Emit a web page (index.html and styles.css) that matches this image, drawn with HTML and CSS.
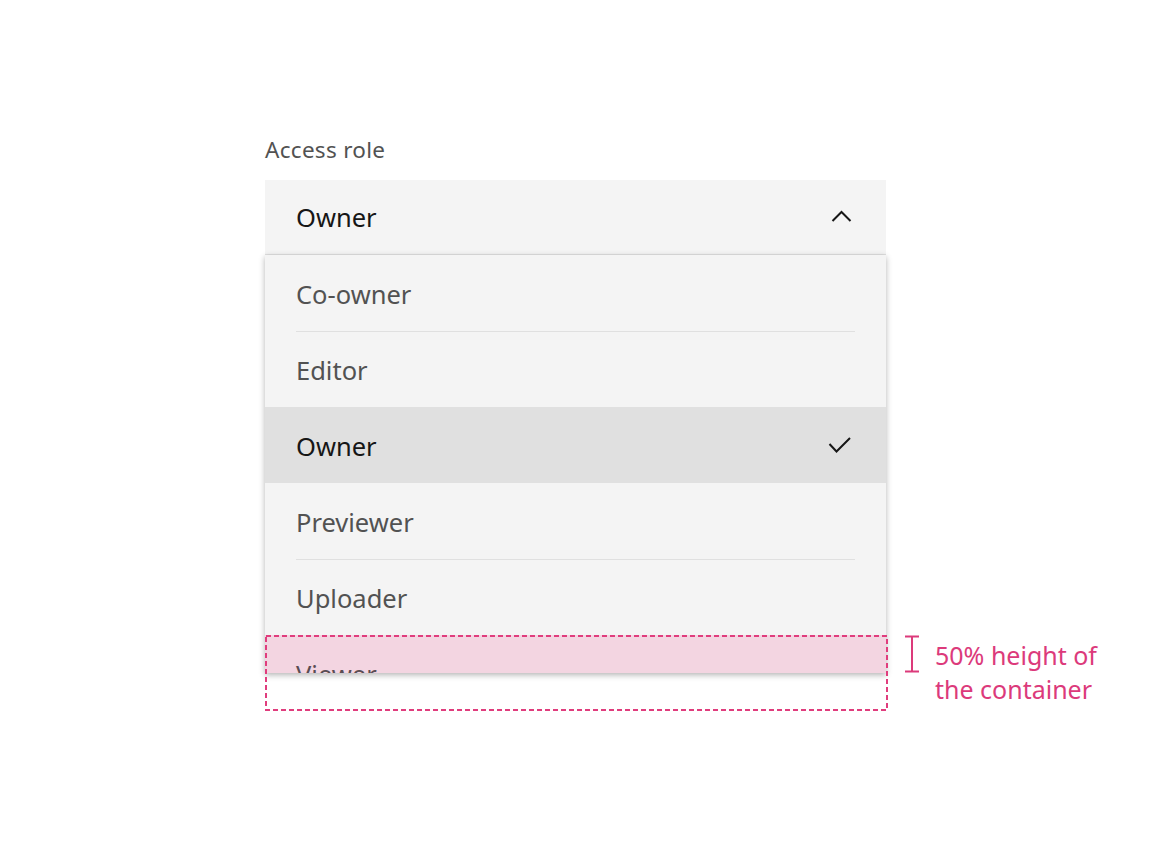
FILE: index.html
```html
<!DOCTYPE html>
<html lang="en">
<head>
<meta charset="utf-8">
<title>Access role dropdown</title>
<link rel="stylesheet" href="styles.css">
</head>
<body>
<div class="page">
  <div class="field-wrap">
    <div class="label">Access role</div>
    <div class="dropdown">
      <div class="field">
        <span class="field-value">Owner</span>
        <svg class="chevron" width="21" height="12" viewBox="0 0 21 12"><polyline points="1.5,11 10.5,2 19.5,11" fill="none" stroke="#161616" stroke-width="2"/></svg>
      </div>
      <div class="menu">
        <div class="item"><span class="item-text">Co-owner</span></div>
        <div class="item sep"><span class="item-text">Editor</span></div>
        <div class="item selected"><span class="item-text">Owner</span>
          <svg class="check" width="23" height="17" viewBox="0 0 23 17"><polyline points="1.5,8 8.5,15.5 22,2" fill="none" stroke="#161616" stroke-width="2"/></svg>
        </div>
        <div class="item"><span class="item-text">Previewer</span></div>
        <div class="item sep"><span class="item-text">Uploader</span></div>
        <div class="item ghost"><span class="item-text">Viewer</span></div>
      </div>
      <svg class="dash-box" width="624" height="77" viewBox="0 0 624 77"><rect x="1" y="1" width="621" height="74" fill="none" stroke="#e03d7d" stroke-width="2" stroke-dasharray="5 3"/></svg>
      <svg class="bracket" width="16" height="38" viewBox="0 0 16 38"><path d="M1 1.5H15M8 1.5V36.5M1 36.5H15" fill="none" stroke="#dc3a7b" stroke-width="2"/></svg>
      <div class="note">50% height of<br>the container</div>
    </div>
  </div>
</div>
</body>
</html>
```

FILE: styles.css
```css
* { box-sizing: border-box; }
html, body { margin: 0; padding: 0; background: #ffffff; }
body { font-family: "Noto Sans", "Open Sans", sans-serif; min-height: 864px; }

.page {
  padding-top: 135px;
  padding-left: 265px;
  padding-bottom: 120px;
}

.field-wrap { width: 621px; }

.label {
  font-size: 22.5px;
  line-height: 30px;
  letter-spacing: 0.3px;
  color: #525252;
  margin-bottom: 15px;
}

.dropdown {
  position: relative;
  padding-bottom: 60px;
}

.field {
  height: 75px;
  background: #f4f4f4;
  border-bottom: 1px solid #e0e0e0;
  display: flex;
  align-items: center;
  justify-content: space-between;
  padding: 0 34px 0 31px;
}

.field-value {
  font-size: 25.5px;
  color: #161616;
}

.chevron { display: block; margin-top: -3px; }

.menu {
  height: 418px;
  overflow: hidden;
  background: #f4f4f4;
  box-shadow: 0 2px 6px rgba(0, 0, 0, 0.3);
  display: flex;
  flex-direction: column;
  position: relative;
  z-index: 1;
}

.item {
  flex: 0 0 76px;
  height: 76px;
  padding: 0 31px;
  display: flex;
  align-items: stretch;
  justify-content: space-between;
}

.item-text {
  flex: 1;
  display: flex;
  align-items: center;
  font-size: 25.5px;
  color: #525252;
  border-top: 1px solid transparent;
}

.item.sep .item-text { border-top-color: #e0e0e0; }

.item.selected {
  background: #e0e0e0;
  padding-right: 35px;
  align-items: center;
}
.item.selected .item-text { color: #161616; align-self: stretch; }

.check { display: block; margin-top: -2px; }

.item.ghost { background: #f3d5e1; }
.item.ghost .item-text { color: #5a4d53; }

.dash-box {
  position: absolute;
  left: 0;
  top: 455px;
  z-index: 2;
}

.bracket {
  position: absolute;
  left: 639px;
  top: 455px;
}

.note {
  position: absolute;
  left: 670px;
  top: 458px;
  white-space: nowrap;
  font-size: 25px;
  line-height: 34px;
  color: #dc3a7b;
}
```
